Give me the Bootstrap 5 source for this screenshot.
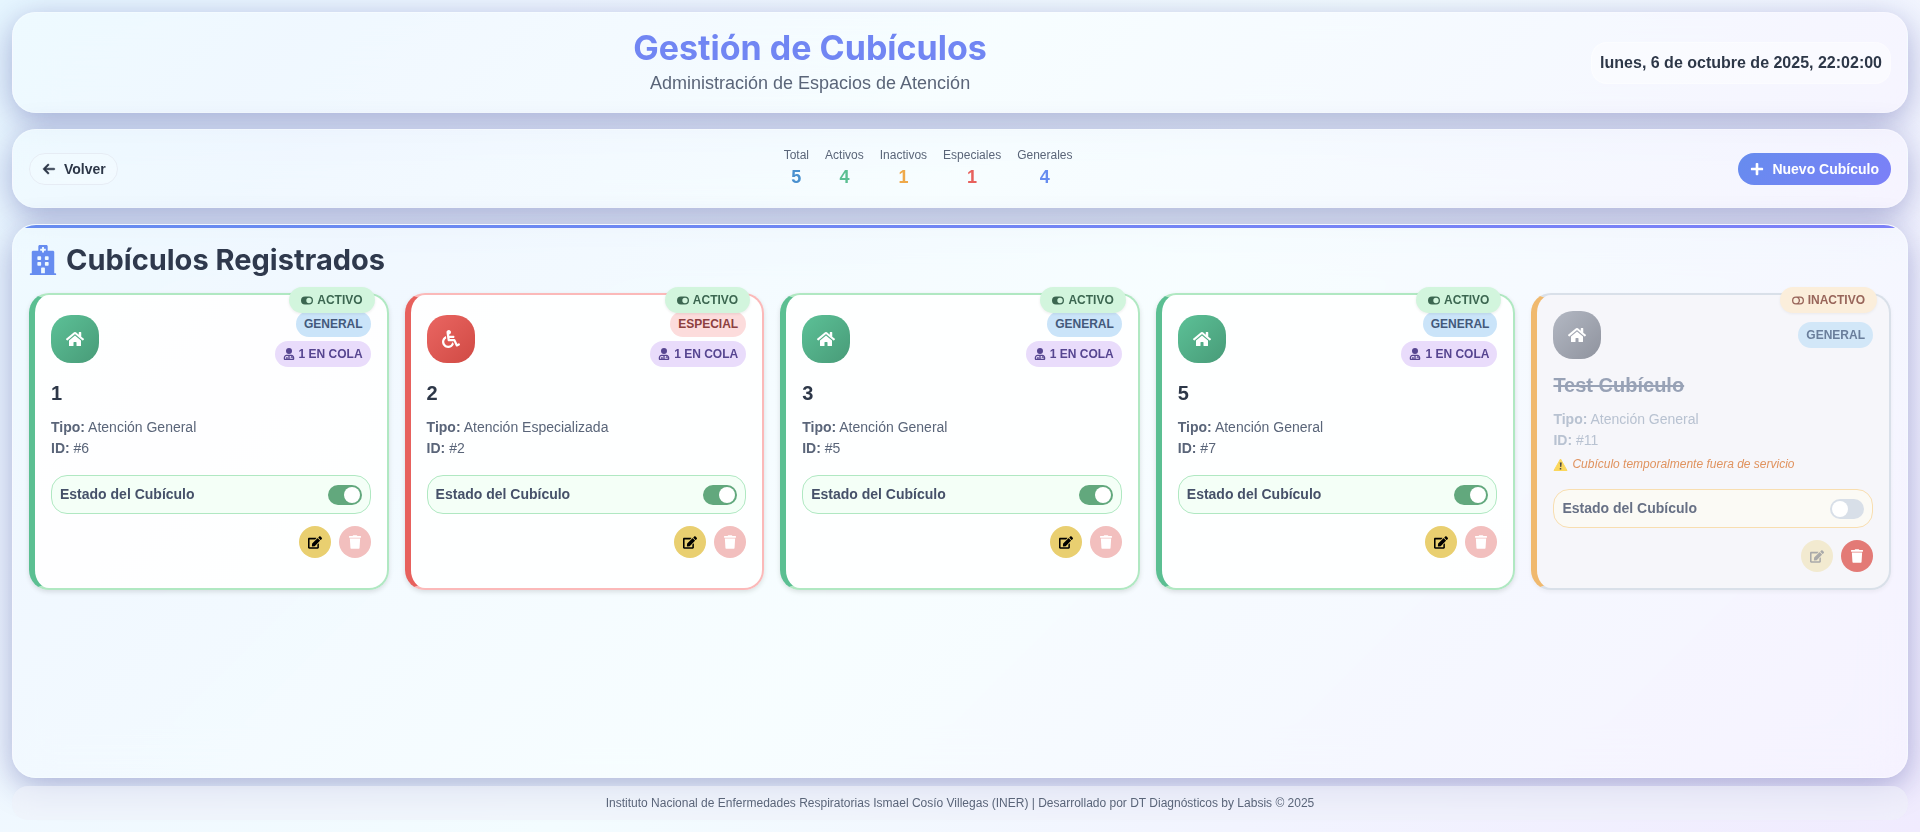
<!DOCTYPE html>
<html lang="es">
<head>
<meta charset="utf-8">
<meta name="viewport" content="width=device-width, initial-scale=1">
<title>Gestión de Cubículos</title>
<link href="https://cdn.jsdelivr.net/npm/bootstrap@5.3.0/dist/css/bootstrap.min.css" rel="stylesheet">
<style>
  body {
    font-family: "Liberation Sans", Arial, sans-serif;
    font-size: 14px;
    color: #2d3748;
    background: linear-gradient(135deg, #e6f6ff 0%, #eef6ff 20%, #f3fcff 50%, #f2f4ff 75%, #f0ebfe 100%) fixed;
  }
  svg { fill: currentColor; flex: none; }
  .glass {
    background: linear-gradient(135deg, rgba(240, 251, 255, .75) 0%, rgba(241, 248, 255, .75) 15%, rgba(248, 254, 255, .75) 50%, rgba(246, 249, 255, .75) 75%, rgba(247, 244, 255, .75) 100%);
    backdrop-filter: blur(20px);
    border: 1px solid rgba(255, 255, 255, .3);
    border-radius: 24px;
    box-shadow: 0 8px 32px rgba(31, 38, 135, .35);
    padding: 16px;
  }
  .page-title { font: 700 34px/38px Inter, sans-serif; color: #7186f3; }
  .page-sub { font-size: 18px; line-height: 25px; color: #5a6579; }
  .clock { font-size: 16px; line-height: 24px; padding: 8px; border: 1px solid rgba(255,255,255,.4); border-radius: 16px; background: rgba(255,255,255,.4); }
  .pill-btn { font-size: 14px; font-weight: 700; line-height: 20px; padding: 5px 11px; border-radius: 16px; gap: 8px; }
  .btn-back, .btn-back:hover { color: #2d3748; border: 1px solid #e6ecf4; background: rgba(255,255,255,.15); padding-left: 12px; }
  .btn-new, .btn-new:hover { color: #fff; border: 1px solid transparent; background: linear-gradient(135deg, #668cee, #7c80f8) border-box; }
  .stat-name { font-size: 12px; line-height: 18px; color: #5a6579; }
  .stat-num { font-size: 18px; line-height: 27px; font-weight: 700; }
  .board { position: relative; overflow: hidden; }
  .board::before { content: ""; position: absolute; inset: 0 0 auto 0; height: 3px; background: linear-gradient(90deg, #668cf0, #7c80f8); }
  .board-title { font: 700 29px/38px Inter, sans-serif; color: #2f394d; gap: 9px; margin-bottom: 14px; }
  .board-title svg { color: #668cf0; }
  .cubicles { display: grid; grid-template-columns: repeat(auto-fill, minmax(320px, 1fr)); gap: 16px; }
  .cubicle {
    position: relative; padding: 16px; border: 2px solid #b0e8c2; border-left: 6px solid #5bbf92;
    border-radius: 20px; background: rgba(255,255,255,.96); box-shadow: 0 2px 5px rgba(0,0,0,.12);
  }
  .cubicle.special { border-color: #fbb9b9; border-left-color: #e7615d; }
  .cubicle.off { border-color: #d9e0e9; border-left-color: #f0b96e; background: #f6f6fa; box-shadow: 0 2px 4px rgba(0,0,0,.05); }
  .tile { width: 48px; height: 48px; border-radius: 20px; color: #fff; background: linear-gradient(135deg, #5cc197, #489b78); }
  .special .tile { background: linear-gradient(135deg, #ea6662, #d04a44); }
  .off .tile { background: linear-gradient(135deg, #b3b8c3, #8f939e); }
  .tag { font-size: 12px; font-weight: 700; line-height: 18px; padding: 4px 8px; border-radius: 13px; gap: 4px; text-transform: uppercase; }
  .tag-general { background: #cae4f9; color: #43597b; }
  .off .tag-general { background: #d2e7f8; color: #6a7e9b; }
  .tag-special { background: #fcdcdc; color: #8d403f; }
  .tag-queue { background: #e9dcfb; color: #564590; }
  .tag-state { position: absolute; top: -8px; right: 12px; padding: 4px 12px; background: #d2f5dd; color: #3b6650; box-shadow: 0 1px 3px rgba(0,0,0,.08); }
  .off .tag-state { background: #fbeedb; color: #98655a; box-shadow: 0 1px 3px rgba(0,0,0,.05); }
  .cub-name { font-size: 20px; font-weight: 700; line-height: 28px; margin: 12px 0 10px; }
  .off .cub-name { color: #98a2b6; text-decoration: line-through; }
  .info { line-height: 21px; color: #5a6579; }
  .off .info { color: #b8c2d1; }
  .warn { font-size: 12px; line-height: 18px; margin-top: 4px; gap: 4px; font-style: italic; color: #e0935f; }
  .state-box { font-weight: 700; line-height: 21px; padding: 8px; margin: 16px 0 12px; border: 1px solid #b0e8c2; border-radius: 16px; background: #f4fff7; color: #465169; }
  .off .state-box { border-color: #f8deb0; background: #fbfaf5; color: #677085; }
  .toggle { appearance: none; width: 34px; height: 20px; margin: 0; border-radius: 10px; background: #d8dfe8; padding: 2px; }
  .toggle::before { content: ""; display: block; width: 16px; height: 16px; border-radius: 50%; background: #fff; }
  .toggle:checked { background: #62a87d; }
  .toggle:checked::before { margin-left: auto; }
  .round-btn { width: 32px; height: 32px; border: 0; padding: 0; border-radius: 50%; color: #fff; background: #e37a76; }
  .round-btn.edit { background: #e9cf70; color: #000; }
  .round-btn.remove:disabled { background: #f2bfbe; }
  .round-btn.edit:disabled { background: #f2ead0; color: #a9a9a9; }
  .foot { font-size: 12px; line-height: 18px; padding: 8px; border-radius: 16px; color: #5a6579; background: rgba(240,242,250,.55); backdrop-filter: blur(10px); }
</style>
</head>
<body>
<svg class="d-none" aria-hidden="true">
  <symbol id="home" viewBox="0 0 576 512"><path d="M280.37 148.26L96 300.11V464a16 16 0 0 0 16 16l112.06-.29a16 16 0 0 0 15.92-16V368a16 16 0 0 1 16-16h64a16 16 0 0 1 16 16v95.64a16 16 0 0 0 16 16.05L464 480a16 16 0 0 0 16-16V300L295.67 148.26a12.19 12.19 0 0 0-15.3 0zM571.6 251.47L488 182.56V44.05a12 12 0 0 0-12-12h-56a12 12 0 0 0-12 12v72.61L318.47 43a48 48 0 0 0-61 0L4.34 251.47a12 12 0 0 0-1.6 16.9l25.5 31A12 12 0 0 0 45.15 301l235.22-193.74a12.19 12.19 0 0 1 15.3 0L530.9 301a12 12 0 0 0 16.9-1.6l25.5-31a12 12 0 0 0-1.7-16.93z"/></symbol>
  <symbol id="wheel" viewBox="0 0 512 512"><path d="M496.101 385.669l14.227 28.663c3.929 7.915.697 17.516-7.218 21.445l-65.465 32.886c-16.049 7.967-35.556 1.194-43.189-15.055L331.679 320H192c-15.925 0-29.426-11.71-31.679-27.475C126.433 55.308 128.38 70.044 128 64c0-36.358 30.318-65.635 67.052-63.929 33.271 1.545 60.048 28.905 60.925 62.201.868 32.933-23.152 60.423-54.608 65.039l4.67 32.69H336c8.837 0 16 7.163 16 16v32c0 8.837-7.163 16-16 16H215.182l4.572 32H352a32 32 0 0 1 28.962 18.392L438.477 396.8l36.178-18.349c7.915-3.929 17.517-.697 21.446 7.218zM311.358 352h-24.506c-7.788 54.204-54.528 96-110.852 96-61.757 0-112-50.243-112-112 0-41.505 22.694-77.809 56.324-97.156-3.712-25.965-6.844-47.86-9.488-66.333C45.956 198.464 0 261.963 0 336c0 97.047 78.953 176 176 176 71.87 0 133.806-43.308 161.11-105.192L311.358 352z"/></symbol>
  <symbol id="edit" viewBox="0 0 576 512"><path d="M402.6 83.2l90.2 90.2c3.8 3.8 3.8 10 0 13.8L274.4 405.6l-92.8 10.3c-12.4 1.4-22.9-9.1-21.5-21.5l10.3-92.8L388.8 83.2c3.8-3.8 10-3.8 13.8 0zm162-22.9l-48.8-48.8c-15.2-15.2-39.9-15.2-55.2 0l-35.4 35.4c-3.8 3.8-3.8 10 0 13.8l90.2 90.2c3.8 3.8 10 3.8 13.8 0l35.4-35.4c15.2-15.3 15.2-40 0-55.2zM384 346.2V448H64V128h229.8c3.2 0 6.2-1.3 8.5-3.5l40-40c7.6-7.6 2.2-20.5-8.5-20.5H48C21.5 64 0 85.5 0 112v352c0 26.5 21.5 48 48 48h352c26.5 0 48-21.5 48-48V306.2c0-10.7-12.9-16-20.5-8.5l-40 40c-2.2 2.3-3.5 5.3-3.5 8.5z"/></symbol>
  <symbol id="trash" viewBox="0 0 448 512"><path d="M432 32H312l-9.4-18.7A24 24 0 0 0 281.1 0H166.8a23.72 23.72 0 0 0-21.4 13.3L136 32H16A16 16 0 0 0 0 48v32a16 16 0 0 0 16 16h416a16 16 0 0 0 16-16V48a16 16 0 0 0-16-16zM53.2 467a48 48 0 0 0 47.9 45h245.8a48 48 0 0 0 47.9-45L416 128H32z"/></symbol>
  <symbol id="on" viewBox="0 0 576 512"><path fill-rule="evenodd" d="M192 64h192a192 192 0 0 1 0 384H192a192 192 0 0 1 0-384zm192 64a128 128 0 1 0 0 256a128 128 0 0 0 0-256z"/></symbol>
  <symbol id="off" viewBox="0 0 576 512"><path fill-rule="evenodd" d="M192 64h192a192 192 0 0 1 0 384H192a192 192 0 0 1 0-384zm0 64a128 128 0 1 0 0 256a128 128 0 0 0 0-256zm140 0a192 192 0 0 1 0 256h52a128 128 0 0 0 0-256z"/></symbol>
  <symbol id="nurse" viewBox="0 0 448 512"><path fill-rule="evenodd" d="M224 0a128 128 0 1 1 0 256a128 128 0 0 1 0-256zM120 288h208c70 0 120 60 120 130v54c0 24-16 40-40 40H40c-24 0-40-16-40-40v-54c0-70 50-130 120-130zm-24 56c-26 16-40 42-40 74v38h50v-50a30 30 0 0 1 60 0v50h30v-112zm156 0v112h130v-38c0-32-14-58-40-74v44h30v32h-76v-32h16v-44z"/></symbol>
</svg>

<div class="d-flex flex-column min-vh-100 p-2">
  <header class="glass d-flex align-items-center m-1 mb-3">
    <div class="flex-grow-1 text-center">
      <h1 class="page-title mb-1">Gestión de Cubículos</h1>
      <p class="page-sub m-0">Administración de Espacios de Atención</p>
    </div>
    <time class="clock fw-bold" datetime="2025-10-06T22:02:00">lunes, 6 de octubre de 2025, 22:02:00</time>
  </header>

  <nav class="glass d-flex align-items-center justify-content-between mx-1 mb-3">
    <button type="button" class="btn pill-btn btn-back d-flex align-items-center">
      <svg width="14" height="14" viewBox="-10 -10 468 532" stroke="currentColor" stroke-width="20"><path d="M9.4 233.4c-12.5 12.5-12.5 32.8 0 45.3l160 160c12.5 12.5 32.8 12.5 45.3 0s12.5-32.8 0-45.3L109.2 288 416 288c17.7 0 32-14.3 32-32s-14.3-32-32-32l-306.7 0L214.6 118.6c12.5-12.5 12.5-32.8 0-45.3s-32.8-12.5-45.3 0l-160 160z"/></svg>Volver
    </button>
    <div class="d-flex gap-3 text-center">
      <div><div class="stat-name">Total</div><div class="stat-num" style="color:#4990cf">5</div></div>
      <div><div class="stat-name">Activos</div><div class="stat-num" style="color:#5bbf92">4</div></div>
      <div><div class="stat-name">Inactivos</div><div class="stat-num" style="color:#efa94a">1</div></div>
      <div><div class="stat-name">Especiales</div><div class="stat-num" style="color:#e7615d">1</div></div>
      <div><div class="stat-name">Generales</div><div class="stat-num" style="color:#668cf0">4</div></div>
    </div>
    <button type="button" class="btn pill-btn btn-new d-flex align-items-center">
      <svg width="14" height="14" viewBox="0 0 448 512"><path d="M416 208H272V64a32 32 0 0 0-32-32h-32a32 32 0 0 0-32 32v144H32a32 32 0 0 0-32 32v32a32 32 0 0 0 32 32h144v144a32 32 0 0 0 32 32h32a32 32 0 0 0 32-32V304h144a32 32 0 0 0 32-32v-32a32 32 0 0 0-32-32z"/></svg>Nuevo Cubículo
    </button>
  </nav>

  <main class="glass board flex-grow-1 mx-1 mb-2">
    <h2 class="board-title d-flex align-items-center">
      <svg width="28" height="30" viewBox="0 0 448 512"><path fill-rule="evenodd" d="M448 492v20H0v-20c0-7 5-12 12-12h20V120c0-13 11-24 24-24h88V24c0-13 11-24 24-24h112c13 0 24 11 24 24v72h88c13 0 24 11 24 24v360h20c7 0 12 5 12 12zM308 192h-40c-7 0-12 5-12 12v40c0 7 5 12 12 12h40c7 0 12-5 12-12v-40c0-7-5-12-12-12zm-168 64h40c7 0 12-5 12-12v-40c0-7-5-12-12-12h-40c-7 0-12 5-12 12v40c0 7 5 12 12 12zm104 128h-40c-7 0-12 5-12 12v84h64v-84c0-7-5-12-12-12zm64-96h-40c-7 0-12 5-12 12v40c0 7 5 12 12 12h40c7 0 12-5 12-12v-40c0-7-5-12-12-12zm-116 52v-40c0-7-5-12-12-12h-40c-7 0-12 5-12 12v40c0 7 5 12 12 12h40c7 0 12-5 12-12zM182 96h26v26c0 3 3 6 6 6h20c3 0 6-3 6-6V96h26c3 0 6-3 6-6V70c0-3-3-6-6-6h-26V38c0-3-3-6-6-6h-20c-3 0-6 3-6 6v26h-26c-3 0-6 3-6 6v20c0 3 3 6 6 6z"/></svg>
      Cubículos Registrados
    </h2>
    <div class="cubicles" id="cubicles"></div>
  </main>

  <footer class="foot text-center mx-1 mb-1">Instituto Nacional de Enfermedades Respiratorias Ismael Cosío Villegas (INER) | Desarrollado por DT Diagnósticos by Labsis © 2025</footer>
</div>

<script>
  const cubicles = [
    { name: '1', id: 6, queue: 1, active: true },
    { name: '2', id: 2, queue: 1, active: true, special: true },
    { name: '3', id: 5, queue: 1, active: true },
    { name: '5', id: 7, queue: 1, active: true },
    { name: 'Test Cubículo', id: 11, queue: 0, active: false }
  ];
  const icon = (id, w, h) => `<svg width="${w}" height="${h}" aria-hidden="true"><use href="#${id}"/></svg>`;
  document.getElementById('cubicles').innerHTML = cubicles.map(c => `
    <article class="cubicle ${c.special ? 'special' : ''} ${c.active ? '' : 'off'}">
      <span class="tag tag-state d-flex align-items-center">${icon(c.active ? 'on' : 'off', 12, 11)}${c.active ? 'Activo' : 'Inactivo'}</span>
      <div class="d-flex align-items-center justify-content-between">
        <div class="tile d-flex align-items-center justify-content-center">${c.special ? icon('wheel', 18, 18) : icon('home', 18, 16)}</div>
        <div class="d-flex flex-column align-items-end gap-1">
          <span class="tag ${c.special ? 'tag-special' : 'tag-general'}">${c.special ? 'Especial' : 'General'}</span>
          ${c.queue ? `<span class="tag tag-queue d-flex align-items-center">${icon('nurse', 12, 12)}${c.queue} en cola</span>` : ''}
        </div>
      </div>
      <h3 class="cub-name">${c.name}</h3>
      <div class="info"><strong>Tipo:</strong> Atención ${c.special ? 'Especializada' : 'General'}</div>
      <div class="info"><strong>ID:</strong> #${c.id}</div>
      ${c.active ? '' : `<div class="warn d-flex align-items-center"><svg width="15" height="13" viewBox="0 0 30 26"><path fill="#fbd75c" stroke="#fbd75c" stroke-width="2" stroke-linejoin="round" d="M15 2 28 25H2z"/><path fill="#4d4a45" d="M13.500 9h4l-1 9h-2zM13.500 20h3v3h-3z"/></svg>Cubículo temporalmente fuera de servicio</div>`}
      <div class="state-box d-flex align-items-center justify-content-between">
        <label for="state-${c.id}">Estado del Cubículo</label>
        <input class="toggle" type="checkbox" role="switch" id="state-${c.id}" ${c.active ? 'checked' : ''}>
      </div>
      <div class="d-flex justify-content-end gap-2">
        <button type="button" class="round-btn edit d-flex align-items-center justify-content-center" aria-label="Editar" ${c.active ? '' : 'disabled'}>${icon('edit', 14, 13)}</button>
        <button type="button" class="round-btn remove d-flex align-items-center justify-content-center" aria-label="Eliminar" ${c.active ? 'disabled' : ''}>${icon('trash', 12, 14)}</button>
      </div>
    </article>`).join('');
</script>
<script src="https://cdn.jsdelivr.net/npm/bootstrap@5.3.0/dist/js/bootstrap.bundle.min.js"></script>
</body>
</html>
